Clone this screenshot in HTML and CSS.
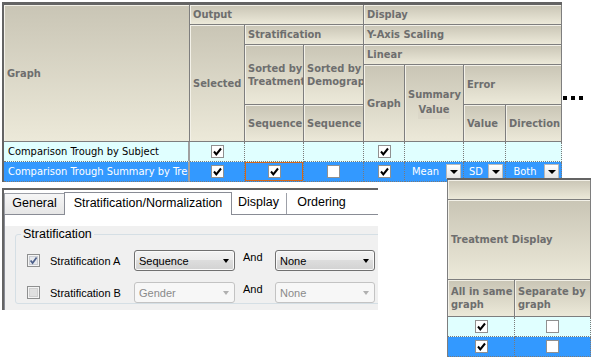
FILE: index.html
```html
<!DOCTYPE html>
<html lang="en">
<head>
    <meta charset="UTF-8">
    <title>Graph Options</title>
    <link rel="stylesheet" href="styles.css">
</head>
<body>
    <div class="top">
        <div class="grid-frame">
            <table class="grid">
                <colgroup>
                    <col class="c-name"><col class="c-sel"><col class="c-sbt"><col class="c-sbd">
                    <col class="c-gr"><col class="c-sum"><col class="c-val"><col class="c-dir">
                </colgroup>
                <tr class="h1">
                    <th rowspan="5"><div class="hc">Graph</div></th>
                    <th colspan="3"><div class="hc">Output</div></th>
                    <th colspan="4"><div class="hc">Display</div></th>
                </tr>
                <tr class="h2">
                    <th rowspan="4"><div class="hc">Selected</div></th>
                    <th colspan="2"><div class="hc">Stratification</div></th>
                    <th colspan="4"><div class="hc">Y-Axis Scaling</div></th>
                </tr>
                <tr class="h3">
                    <th rowspan="2"><div class="hc">Sorted by<br>Treatment</div></th>
                    <th rowspan="2"><div class="hc">Sorted by<br>Demographics</div></th>
                    <th colspan="4"><div class="hc">Linear</div></th>
                </tr>
                <tr class="h4">
                    <th rowspan="2"><div class="hc">Graph</div></th>
                    <th rowspan="2"><div class="hc ctr">Summary<br><span class="vbox">Value</span></div></th>
                    <th colspan="2"><div class="hc">Error</div></th>
                </tr>
                <tr class="h5">
                    <th><div class="hc">Sequence</div></th>
                    <th><div class="hc">Sequence</div></th>
                    <th><div class="hc">Value</div></th>
                    <th><div class="hc">Direction</div></th>
                </tr>
                <tr class="row-a">
                    <td class="name"><div class="cell-text">Comparison Trough by Subject</div></td>
                    <td class="ck"><span class="gchk"><svg width="11" height="11" viewBox="0 0 11 11"><path d="M2 5.5 L4.3 8.3 L9 2.5" fill="none" stroke="#000" stroke-width="2"/></svg></span></td>
                    <td></td>
                    <td></td>
                    <td class="ck"><span class="gchk"><svg width="11" height="11" viewBox="0 0 11 11"><path d="M2 5.5 L4.3 8.3 L9 2.5" fill="none" stroke="#000" stroke-width="2"/></svg></span></td>
                    <td></td>
                    <td></td>
                    <td></td>
                </tr>
                <tr class="row-b">
                    <td class="name"><div class="cell-text">Comparison Trough Summary by Treatment</div></td>
                    <td class="ck"><span class="gchk"><svg width="11" height="11" viewBox="0 0 11 11"><path d="M2 5.5 L4.3 8.3 L9 2.5" fill="none" stroke="#000" stroke-width="2"/></svg></span></td>
                    <td class="ck focus"><span class="gchk"><svg width="11" height="11" viewBox="0 0 11 11"><path d="M2 5.5 L4.3 8.3 L9 2.5" fill="none" stroke="#000" stroke-width="2"/></svg></span></td>
                    <td class="ck"><span class="gchk"></span></td>
                    <td class="ck"><span class="gchk"><svg width="11" height="11" viewBox="0 0 11 11"><path d="M2 5.5 L4.3 8.3 L9 2.5" fill="none" stroke="#000" stroke-width="2"/></svg></span></td>
                    <td><div class="dd"><span>Mean</span><span class="dd-btn"><i class="tri"></i></span></div></td>
                    <td><div class="dd"><span>SD</span><span class="dd-btn"><i class="tri"></i></span></div></td>
                    <td><div class="dd"><span>Both</span><span class="dd-btn"><i class="tri"></i></span></div></td>
                </tr>
            </table>
        </div>
        <div class="dots"><i></i><i></i><i></i></div>
    </div>

    <div class="bottom">
        <div class="dialog">
            <div class="tabs">
                <div class="tab t-gen">General</div>
                <div class="tab sel t-strat">Stratification/Normalization</div>
                <div class="tab t-disp">Display</div>
                <div class="tab t-ord">Ordering</div>
            </div>
            <div class="page">
                <div class="pane">
                    <fieldset class="group">
                        <legend>Stratification</legend>
                        <div class="strat-row first">
                            <span class="cb">
                                <svg width="13" height="13" viewBox="0 0 13 13">
                                    <rect x="0.5" y="0.5" width="12" height="12" fill="#f4f4f4" stroke="#8e8f8f"/>
                                    <rect x="2.5" y="2.5" width="8" height="8" fill="#e6e8ec" stroke="#c9ccd2"/>
                                    <path d="M3.6 6.4 L5.6 9 L9.6 3.4" fill="none" stroke="#4c5f8a" stroke-width="1.7"/>
                                </svg>
                            </span>
                            <span class="lbl">Stratification A</span>
                            <div class="combo"><span>Sequence</span><i class="arrow"></i></div>
                            <span class="and">And</span>
                            <div class="combo wide"><span>None</span><i class="arrow"></i></div>
                        </div>
                        <div class="strat-row">
                            <span class="cb">
                                <svg width="13" height="13" viewBox="0 0 13 13">
                                    <rect x="0.5" y="0.5" width="12" height="12" fill="#f4f4f4" stroke="#8e8f8f"/>
                                    <rect x="2.5" y="2.5" width="8" height="8" fill="#e0e0e0" stroke="#cfcfcf"/>
                                </svg>
                            </span>
                            <span class="lbl">Stratification B</span>
                            <div class="combo off"><span>Gender</span><i class="arrow"></i></div>
                            <span class="and">And</span>
                            <div class="combo wide off"><span>None</span><i class="arrow"></i></div>
                        </div>
                    </fieldset>
                </div>
            </div>
        </div>

        <div class="side-frame">
            <table class="grid side">
                <colgroup><col class="c-same"><col class="c-sep"></colgroup>
                <tr class="h1"><th colspan="2"></th></tr>
                <tr class="s2"><th colspan="2"><div class="hc">Treatment Display</div></th></tr>
                <tr class="h5">
                    <th><div class="hc">All in same<br>graph</div></th>
                    <th><div class="hc">Separate by<br>graph</div></th>
                </tr>
                <tr class="row-a">
                    <td class="ck"><span class="gchk"><svg width="11" height="11" viewBox="0 0 11 11"><path d="M2 5.5 L4.3 8.3 L9 2.5" fill="none" stroke="#000" stroke-width="2"/></svg></span></td>
                    <td class="ck"><span class="gchk"></span></td>
                </tr>
                <tr class="row-b">
                    <td class="ck"><span class="gchk"><svg width="11" height="11" viewBox="0 0 11 11"><path d="M2 5.5 L4.3 8.3 L9 2.5" fill="none" stroke="#000" stroke-width="2"/></svg></span></td>
                    <td class="ck"><span class="gchk"></span></td>
                </tr>
            </table>
        </div>
    </div>
</body>
</html>
```

FILE: styles.css
```css
body {
    margin: 0;
    width: 592px;
    height: 361px;
    overflow: hidden;
    background-color: #fff;
    font-family: "DejaVu Sans Condensed", "DejaVu Sans", sans-serif;
    font-size: 11px;
}
.top {
    display: flex;
    align-items: flex-start;
}
.grid-frame {
    margin: 2px 0 0 2px;
    border-top: 3px solid #646464;
    border-left: 2px solid #646464;
    width: 558px;
}
.grid {
    border-collapse: separate;
    border-spacing: 0;
    table-layout: fixed;
    width: 558px;
}
.c-name { width: 186px; }
.c-sel { width: 55px; }
.c-sbt { width: 59px; }
.c-sbd { width: 60px; }
.c-gr { width: 41px; }
.c-sum { width: 59px; }
.c-val { width: 42px; }
.c-dir { width: 56px; }
.grid th {
    padding: 0;
    background: linear-gradient(#c9c5b5, #ece9d9);
    color: #6e6e6e;
    font-weight: bold;
    text-align: left;
    vertical-align: middle;
    border-right: 1px solid #7e7e7e;
    border-bottom: 1px solid #7e7e7e;
    box-shadow: inset 1px 1px 0 #f3f1e8;
}
.hc {
    overflow: hidden;
    white-space: nowrap;
    padding: 0 3px;
    line-height: 13px;
}
.hc.ctr {
    text-align: center;
}
.vbox {
    display: inline-block;
    padding: 2px 1px 3px;
    background-color: #dbd7c8;
}
.h1 { height: 20px; }
.h2 { height: 20px; }
.h3 { height: 20px; }
.h4 { height: 40px; }
.h5 { height: 37px; }
.grid td {
    height: 19px;
    padding: 0;
    white-space: nowrap;
    overflow: hidden;
    border-right: 1px dotted #7a7a7a;
    border-bottom: 1px dotted #7a7a7a;
}
.row-a td {
    background-color: #e0ffff;
    color: #000;
}
.row-b td {
    background-color: #3399ff;
    color: #fff;
}
.grid td.name {
    border-right: 2px solid #a0a0a0;
}
.cell-text {
    overflow: hidden;
    padding-left: 4px;
}
.grid td.ck {
    text-align: center;
    line-height: 0;
}
.grid td.focus {
    box-shadow: inset 0 0 0 1px #d2691e;
}
.gchk {
    display: inline-block;
    width: 13px;
    height: 13px;
    box-sizing: border-box;
    border: 1px solid #909090;
    background-color: #fff;
    vertical-align: middle;
}
.gchk svg {
    display: block;
}
.dd {
    display: flex;
    align-items: center;
    padding-right: 2px;
}
.dd span:first-child {
    flex: 1;
    text-align: center;
}
.dd-btn {
    width: 15px;
    height: 15px;
    box-sizing: border-box;
    border: 1px solid #b8b8b8;
    background: linear-gradient(#ffffff, #e4e4e4);
    display: flex;
    align-items: center;
    justify-content: center;
}
.tri {
    width: 0;
    height: 0;
    border-left: 4px solid transparent;
    border-right: 4px solid transparent;
    border-top: 4px solid #000;
}
.dots {
    display: flex;
    gap: 4px;
    margin: 96px 0 0 1px;
}
.dots i {
    width: 4px;
    height: 4px;
    background-color: #000;
}

.bottom {
    display: flex;
    align-items: flex-start;
}
.dialog {
    margin: 6px 0 0 2px;
    border-top: 2px solid #646464;
    border-left: 2px solid #646464;
    width: 374px;
    height: 120px;
    overflow: hidden;
    background-color: #fff;
    font-family: "Liberation Sans", Arial, sans-serif;
    font-size: 11px;
}
.tabs {
    display: flex;
    align-items: flex-end;
    height: 24px;
    background-color: #fff;
}
.tab {
    box-sizing: border-box;
    height: 21px;
    border: 1px solid #9da0a8;
    border-bottom: none;
    margin-left: -1px;
    background: linear-gradient(#f6f6f6, #e6e6e6);
    font-size: 12.5px;
    line-height: 19px;
    text-align: center;
    color: #000;
}
.tab.sel {
    position: relative;
    z-index: 1;
    height: 23px;
    margin-bottom: -1px;
    line-height: 21px;
    background: #fff;
    border-color: #898c95;
}
.t-gen { width: 61px; margin-left: 0; }
.t-strat { width: 168px; }
.t-disp { width: 56px; border-right-color: #b6b8bd; background: #fff; border-top: none; border-left: none; }
.t-ord { width: 70px; background: #fff; border-top: none; border-right: none; }
.page {
    border-top: 1px solid #898c95;
    border-left: 1px solid #898c95;
    padding-top: 11px;
    background-color: #fff;
}
.pane {
    height: 84px;
    background-color: #f0f0f0;
    overflow: hidden;
}
.group {
    margin: 1px 0 0 10px;
    padding: 0;
    width: 400px;
    min-width: 0;
    border: 1px solid #d5dfe5;
    border-radius: 3px;
}
.group legend {
    margin-left: 5px;
    padding: 0 2px;
    font-size: 12.5px;
    line-height: 15px;
}
.strat-row {
    display: flex;
    align-items: center;
    height: 21px;
    margin-top: 11px;
    padding-left: 11px;
}
.strat-row.first {
    margin-top: 8px;
}
.cb {
    width: 13px;
    height: 13px;
    line-height: 0;
}
.lbl {
    width: 84px;
    margin-left: 10px;
}
.combo {
    width: 101px;
    height: 21px;
    box-sizing: border-box;
    border: 1px solid #707070;
    border-radius: 3px;
    background: linear-gradient(#f3f3f3 0%, #ebebeb 50%, #dddddd 50%, #d2d2d2 100%);
    box-shadow: inset 0 0 0 1px #fafafa;
    display: flex;
    align-items: center;
    justify-content: space-between;
    padding: 0 5px 0 4px;
    color: #000;
}
.combo.wide {
    width: 100px;
}
.arrow {
    width: 0;
    height: 0;
    border-left: 3.5px solid transparent;
    border-right: 3.5px solid transparent;
    border-top: 4px solid #000;
}
.combo.off {
    border-color: #c3c3c3;
    background: #f7f7f7;
    box-shadow: none;
    color: #8a8a8a;
}
.combo.off .arrow {
    border-top-color: #b0b0b0;
}
.and {
    align-self: flex-start;
    width: 32px;
    margin-left: 8px;
    line-height: 14px;
}

.side-frame {
    position: relative;
    z-index: 1;
    margin: -4px 0 0 69px;
    border-top: 2px solid #646464;
    width: 144px;
}
.grid.side {
    width: 144px;
    border-left: 1px solid #7e7e7e;
}
.c-same { width: 67px; }
.c-sep { width: 76px; }
.s2 { height: 80px; }
```
